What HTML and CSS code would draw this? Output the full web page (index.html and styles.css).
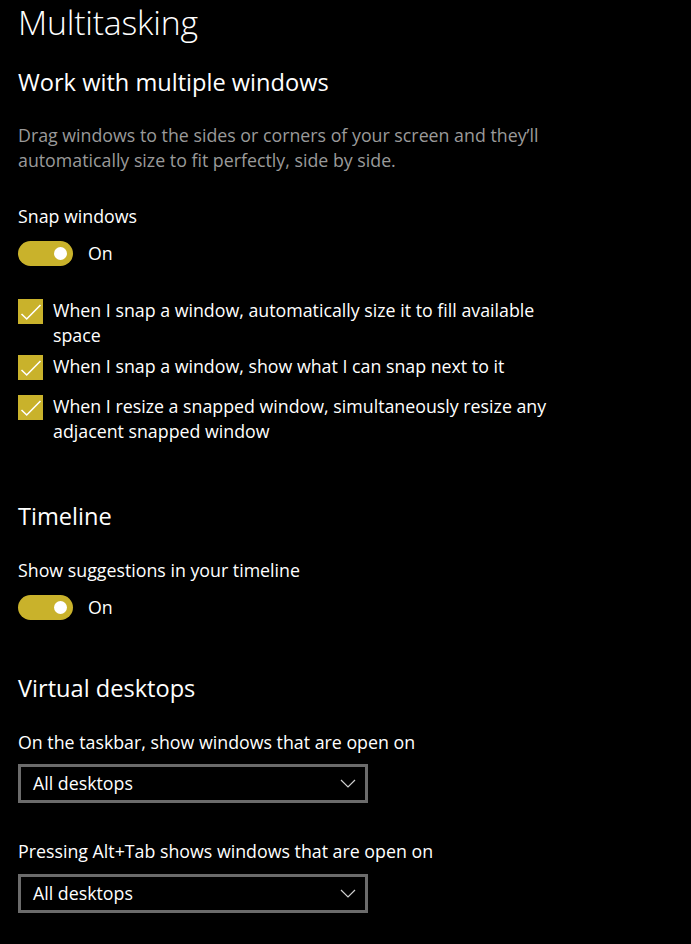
FILE: index.html
```html
<!DOCTYPE html>
<html lang="en">
<head>
<meta charset="utf-8">
<title>Multitasking</title>
<link rel="stylesheet" href="styles.css">
</head>
<body>
<main class="page">
  <h1 class="title">Multitasking</h1>

  <section class="section">
    <h2 class="heading heading-first">Work with multiple windows</h2>
    <p class="desc">Drag windows to the sides or corners of your screen and they’ll<br>automatically size to fit perfectly, side by side.</p>
    <div class="label label-snap">Snap windows</div>
    <div class="toggle-row">
      <span class="toggle"><span class="thumb"></span></span>
      <span class="toggle-text">On</span>
    </div>
    <ul class="checks">
      <li class="check">
        <span class="box"><svg width="25" height="25" viewBox="0 0 25 25"><polyline points="3.5,15 8.7,20 22.5,6" fill="none" stroke="#fff" stroke-width="1.6"/></svg></span>
        <span class="check-text">When I snap a window, automatically size it to fill available<br>space</span>
      </li>
      <li class="check">
        <span class="box"><svg width="25" height="25" viewBox="0 0 25 25"><polyline points="3.5,15 8.7,20 22.5,6" fill="none" stroke="#fff" stroke-width="1.6"/></svg></span>
        <span class="check-text">When I snap a window, show what I can snap next to it</span>
      </li>
      <li class="check">
        <span class="box"><svg width="25" height="25" viewBox="0 0 25 25"><polyline points="3.5,15 8.7,20 22.5,6" fill="none" stroke="#fff" stroke-width="1.6"/></svg></span>
        <span class="check-text">When I resize a snapped window, simultaneously resize any<br>adjacent snapped window</span>
      </li>
    </ul>
  </section>

  <section class="section">
    <h2 class="heading heading-timeline">Timeline</h2>
    <div class="label label-after-heading">Show suggestions in your timeline</div>
    <div class="toggle-row">
      <span class="toggle"><span class="thumb"></span></span>
      <span class="toggle-text">On</span>
    </div>
  </section>

  <section class="section">
    <h2 class="heading heading-virtual">Virtual desktops</h2>
    <div class="label label-after-heading">On the taskbar, show windows that are open on</div>
    <div class="select select-first">
      <span class="select-text">All desktops</span>
      <svg class="chevron" width="16" height="9" viewBox="0 0 16 9"><polyline points="1,1 8,8 15,1" fill="none" stroke="#d0d0d0" stroke-width="1.2"/></svg>
    </div>
    <div class="label label-after-select">Pressing Alt+Tab shows windows that are open on</div>
    <div class="select select-second">
      <span class="select-text">All desktops</span>
      <svg class="chevron" width="16" height="9" viewBox="0 0 16 9"><polyline points="1,1 8,8 15,1" fill="none" stroke="#d0d0d0" stroke-width="1.2"/></svg>
    </div>
  </section>
</main>
</body>
</html>
```

FILE: styles.css
```css
* { box-sizing: border-box; }

html, body {
  margin: 0;
  padding: 0;
  background: #000;
}

body {
  color: #fff;
  font-family: "Open Sans", "Noto Sans", "Liberation Sans", sans-serif;
  font-size: 17.8px;
  line-height: 25px;
}

.page {
  padding: 0 0 0 18px;
  width: 691px;
  height: 944px;
  overflow: hidden;
}

.title {
  margin: 0;
  font-size: 33.8px;
  line-height: 44px;
  font-weight: 300;
  letter-spacing: -0.2px;
}

.section { margin: 0; padding: 0; }

.heading {
  margin: 0;
  font-size: 23.6px;
  line-height: 32px;
  font-weight: 400;
}

.heading-first { margin-top: 22px; }
.heading-timeline { margin-top: 50px; }
.heading-virtual { margin-top: 52px; }

.desc {
  margin: 25px 0 0;
  color: #9a9a9a;
}

.label { margin: 0; }
.label-snap { margin-top: 31px; }
.label-after-heading { margin-top: 26px; }
.label-after-select { margin-top: 36px; }

.toggle-row {
  margin-top: 12px;
  display: flex;
  align-items: center;
  gap: 15px;
  height: 25px;
}

.toggle {
  width: 55px;
  height: 25px;
  border-radius: 13px;
  background: #c9b22b;
  display: flex;
  align-items: center;
  justify-content: flex-end;
  padding-right: 6px;
}

.thumb {
  width: 13px;
  height: 13px;
  border-radius: 50%;
  background: #fff;
}

.checks {
  list-style: none;
  margin: 32px 0 0;
  padding: 0;
}

.check {
  display: flex;
  align-items: flex-start;
  gap: 10px;
  min-height: 40px;
  padding-bottom: 6px;
}

.box {
  flex: none;
  width: 25px;
  height: 25px;
  margin-top: 1px;
  background: #c9b22b;
  display: block;
}

.box svg { display: block; }

.select {
  width: 350px;
  height: 39px;
  border: 3px solid #6b6b6b;
  display: flex;
  align-items: center;
  justify-content: space-between;
  padding: 0 9px 0 12px;
}

.select-first { margin-top: 9px; }
.select-second { margin-top: 10px; }

.select-text { line-height: 33px; }

.chevron { display: block; }
```
